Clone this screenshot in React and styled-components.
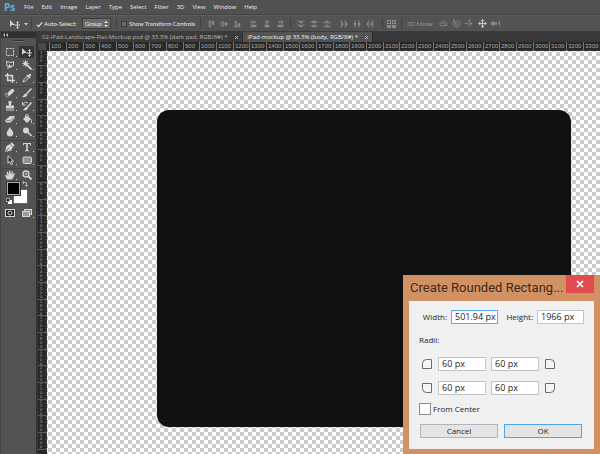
import React from "react";
import styled, { createGlobalStyle, css } from "styled-components";

const ui = '"Open Sans", "Noto Sans", sans-serif';

const GlobalStyle = createGlobalStyle`
  *, *::before, *::after { box-sizing: border-box; }
  body { margin: 0; background: #535353; font-family: ${ui}; }
  button, input, select { font: inherit; color: inherit; margin: 0; padding: 0; border: 0; border-radius: 0; }
`;

const Screen = styled.div`
  display: flex;
  flex-direction: column;
  height: 100vh;
  overflow: hidden;
  font-size: 6px;
  line-height: 8px;
  color: #dcdcdc;
`;

const MenuBar = styled.nav`
  display: flex;
  align-items: center;
  flex: none;
  gap: 8px;
  height: 15px;
  padding-left: 4px;
  background: #515151;
  border-bottom: 1px solid #454545;
`;

const Logo = styled.span`
  width: 12px;
  font-size: 10px;
  line-height: 12px;
  font-weight: 700;
  color: #58b4e8;
`;

const MenuItem = styled.button`
  background: none;
  color: #ececec;
  white-space: nowrap;
`;

const OptionsBar = styled.div`
  display: flex;
  align-items: center;
  flex: none;
  height: 17px;
  padding-left: 10px;
  background: #535353;
  border-top: 1px solid #5e5e5e;
  border-bottom: 1px solid #3b3b3b;
  font-family: Lato, ${ui};
  white-space: nowrap;
`;

const Divider = styled.span`
  flex: none;
  width: 1px;
  height: 11px;
  margin: 0 ${(p) => p.$after || 4}px 0 ${(p) => p.$before || 4}px;
  background: #424242;
`;

const Check = styled.label`
  display: flex;
  flex: none;
  align-items: center;
  gap: 2px;
  width: ${(p) => p.$width}px;
  color: #ececec;
`;

const CheckInput = styled.input`
  appearance: none;
  width: 6px;
  height: 6px;
  background: #6a6a6a;
  border: 1px solid #3c3c3c;
  &:checked {
    border: 0;
    background: none;
  }
  &:checked::after {
    content: "";
    display: block;
    width: 3px;
    height: 6px;
    margin-left: 2px;
    border: solid #eeeeee;
    border-width: 0 1px 1px 0;
    transform: rotate(40deg);
  }
`;

const SelectWrap = styled.span`
  display: flex;
  align-items: center;
  flex: none;
  width: 29px;
  height: 11px;
  margin-left: 5px;
  padding-right: 2px;
  background: #6b6b6b;
  border: 1px solid #3d3d3d;
  border-radius: 1px;
`;

const Select = styled.select`
  appearance: none;
  flex: 1;
  min-width: 0;
  padding-left: 2px;
  background: none;
  color: #ededed;
`;

const IconRow = styled.span`
  display: flex;
  flex: none;
  gap: 3px;
  & + & { margin-left: 7px; }
`;

const IconButton = styled.button`
  display: grid;
  place-items: center;
  flex: none;
  width: 10px;
  height: 10px;
  background: none;
  color: ${(p) => (p.$bright ? "#d0d0d0" : "#8c8c8c")};
`;

const ModeLabel = styled.span`
  width: 26px;
  margin-right: 5px;
  color: #969696;
`;

const Workspace = styled.div`
  display: flex;
  flex: 1;
  min-height: 0;
`;

const Toolbox = styled.aside`
  flex: none;
  width: 37px;
  background: #535353;
  border-left: 1px solid #454545;
  border-right: 1px solid #333333;
`;

const Collapse = styled.button`
  display: flex;
  align-items: center;
  width: 100%;
  height: 6px;
  padding-left: 2px;
  background: #303030;
  color: #bdbdbd;
`;

const Grip = styled.div`
  width: 10px;
  height: 2px;
  margin: 2px auto 4px;
  background: #333333;
  border-bottom: 1px solid #6a6a6a;
`;

const ToolGroup = styled.div`
  display: grid;
  grid-template-columns: 15px 15px;
  grid-auto-rows: 13px;
  column-gap: 2px;
  padding: 0 2px 0 1px;
  & + & {
    margin-top: 1px;
    border-top: 1px solid #454545;
  }
`;

const Tool = styled.button`
  position: relative;
  display: grid;
  place-items: center;
  height: 12px;
  background: ${(p) => (p.$active ? "#353535" : "none")};
  color: #d4d4d4;
  &::after {
    content: "";
    position: absolute;
    right: 0;
    bottom: 1px;
    width: 1px;
    height: 1px;
    background: ${(p) => (p.$plain ? "transparent" : "#c8c8c8")};
  }
`;

const Swatches = styled.div`
  position: relative;
  height: 24px;
  margin: 0 4px 1px;
`;

const Swatch = styled.button`
  position: absolute;
  width: 13px;
  height: 13px;
  ${(p) =>
    p.$front
      ? css`left: 2px; top: 0; background: #000; border: 1px solid #a8a8a8; outline: 1px solid #383838;`
      : css`left: 9px; top: 8px; background: #fff; outline: 1px solid #686868;`}
`;

const SwatchIcon = styled.svg`
  position: absolute;
  ${(p) => (p.$swap ? css`left: 17px; top: -1px;` : css`left: 1px; top: 16px;`)}
`;

const Documents = styled.main`
  display: flex;
  flex-direction: column;
  flex: 1;
  min-width: 0;
`;

const Tabs = styled.div`
  display: flex;
  flex: none;
  height: 10px;
  background: #383838;
`;

const Tab = styled.div`
  display: flex;
  align-items: center;
  gap: 7px;
  padding: 0 3px 0 5px;
  white-space: nowrap;
  background: ${(p) => (p.$active ? "#535353" : "#3b3b3b")};
  color: ${(p) => (p.$active ? "#f2f2f2" : "#b4b4b4")};
  border-right: 1px solid #2c2c2c;
`;

const TabTitle = styled.button`
  background: none;
  white-space: nowrap;
`;

const TabClose = styled.button`
  display: grid;
  place-items: center;
  width: 4px;
  height: 8px;
  background: none;
  color: #b4b4b4;
`;

const Frame = styled.div`
  display: grid;
  grid-template-columns: 10px minmax(0, 1fr);
  grid-template-rows: 9px minmax(0, 1fr);
  flex: 1;
  min-height: 0;
`;

const RulerCorner = styled.div`
  background: #4a4a4a;
  border: 1px solid #303030;
`;

const rulerBox = css`
  display: grid;
  overflow: hidden;
  background: #282828;
  color: #a8a8a8;
  font-family: "Liberation Sans", sans-serif;
`;

const RulerX = styled.div`
  ${rulerBox}
  grid-auto-flow: column;
  grid-auto-columns: 17px 17px 16px;
  padding-left: 2px;
`;

const MarkX = styled.span`
  padding-left: 1px;
  line-height: 8px;
  border-left: 1px solid #747474;
  background: repeating-linear-gradient(90deg, #505050 0 1px, transparent 1px 3px) bottom / 100% 1px no-repeat;
`;

const RulerY = styled.div`
  ${rulerBox}
  grid-template-rows: 15px;
  grid-auto-rows: 17px 17px 16px;
  border-left: 1px solid #383838;
`;

const MarkY = styled.span`
  display: flex;
  flex-direction: column;
  padding-left: 2px;
  font-size: 4px;
  line-height: 4px;
  border-bottom: 1px solid #5c5c5c;
  background: repeating-linear-gradient(#4c4640 0 1px, transparent 1px 3px) right / 2px 100% no-repeat;
`;

const Canvas = styled.div`
  overflow: hidden;
  padding: 59px 0 0 110px;
  background: repeating-conic-gradient(#cbcbcb 0 25%, #ffffff 0 50%) 1px 1px / 8px 8px;
`;

const BodyShape = styled.div`
  width: 414px;
  height: 317px;
  border-radius: 12px;
  background: #111111;
`;

const Dialog = styled.form`
  position: fixed;
  right: 0;
  bottom: 0;
  width: 197px;
  padding: 0 6px 5px;
  background: #d19163;
  color: #1c1c1c;
  font-size: 8px;
  line-height: 12px;
`;

const DialogHead = styled.header`
  display: flex;
  justify-content: space-between;
  height: 26px;
  padding-left: 1px;
`;

const DialogTitle = styled.h1`
  flex: 1;
  min-width: 0;
  margin: 0;
  font-family: Roboto, ${ui};
  font-size: 13px;
  font-weight: 400;
  line-height: 26px;
  white-space: nowrap;
  color: #41291b;
`;

const CloseButton = styled.button`
  display: grid;
  place-items: center;
  flex: none;
  width: 28px;
  height: 18px;
  background: #e04b50;
  color: #ffffff;
`;

const DialogBody = styled.div`
  padding: 9px 10px 11px;
  background: #f0f0f0;
`;

const SizeRow = styled.div`
  display: grid;
  grid-template-columns: 29px 47px 31px 47px;
  justify-content: end;
  align-items: center;
  column-gap: 4px;
`;

const FieldLabel = styled.label`
  text-align: right;
  white-space: nowrap;
`;

const Field = styled.input`
  min-width: 0;
  width: 100%;
  height: 14px;
  padding: 0 0 1px 3px;
  background: #ffffff;
  border: 1px solid ${(p) => (p.$active ? "#58aee8" : "#c4c4c4")};
  font-size: 9px;
  line-height: 11px;
`;

const Radii = styled.fieldset`
  margin: 0;
  padding: 0;
  border: 0;
`;

const Legend = styled.legend`
  padding: 10px 0 11px;
`;

const RadiiGrid = styled.div`
  display: grid;
  grid-template-columns: 12px 48px 48px 12px;
  column-gap: 5px;
  row-gap: 10px;
  align-items: center;
  padding-left: 2px;
`;

const FromCenter = styled.label`
  display: flex;
  align-items: center;
  gap: 2px;
  margin-top: 8px;
`;

const Box = styled.input`
  appearance: none;
  width: 12px;
  height: 12px;
  background: #ffffff;
  border: 1px solid #8c8c8c;
`;

const Actions = styled.div`
  display: grid;
  grid-template-columns: 78px 78px;
  column-gap: 6px;
  margin: 9px 0 0 1px;
`;

const Action = styled.button`
  height: 14px;
  line-height: 12px;
  background: #e4e4e4;
  border: 1px solid ${(p) => (p.$primary ? "#4aa6e8" : "#b4b4b4")};
`;

const Icon = ({ children, size = 10 }) => (
  <svg width={size} height={size} viewBox="0 0 10 10" fill="none" stroke="currentColor" strokeWidth="1" aria-hidden="true">
    {children}
  </svg>
);

const solid = { fill: "currentColor", stroke: "none" };

const moveGlyph = (
  <>
    <path {...solid} d="M0 1v7l2-2h3z" />
    <path d="M7.500 3v6M4.500 6h6" />
    <path {...solid} d="M6 4l1.500-2L9 4zM6 8l1.500 2L9 8z" />
  </>
);

const tools = {
  marquee: <rect x="1.500" y="1.500" width="7" height="7" strokeDasharray="2 1" />,
  move: moveGlyph,
  lasso: <><path d="M2 6L1.500 1.500 6 2.500l2.500-1v4L5 7 2.500 5.500M3 6v3" /><path {...solid} d="M4 4l3 3-3 1z" /></>,
  wand: <><path strokeWidth="1.800" d="M4.500 4.500L9.500 9.500" /><circle {...solid} cx="3.500" cy="3.500" r="2" /><path strokeWidth=".7" d="M3.500 0v7M0 3.500h7M1 1l5 5M6 1L1 6" /></>,
  crop: <><path strokeWidth="1.400" d="M2.500 0v7.500H10M0 2.500h7.500V10" /><path d="M3 7l5-5" strokeWidth=".6" /></>,
  dropper: <><path d="M1 9l1-2.500 3.500-3.500 1.500 1.500L3.500 8z" /><path {...solid} d="M4.500 2.500l1-1 1 .8L8 .5 9.500 2 7.700 3.700l.8 1-1 .8z" /></>,
  heal: <><path strokeWidth="3.400" strokeLinecap="round" d="M4 6l3.500-3.500" /><path d="M1 5c-1 2 0 4 2.500 4" strokeDasharray="1 .6" /></>,
  brush: <><path strokeWidth="1.500" d="M9.500.5L4.500 6" /><path {...solid} d="M4 5.500L5.500 7C4.500 9 2 9.500 0 9c1.500-.5 1.500-3 4-3.500z" /></>,
  stamp: <path {...solid} d="M3.500 0h3v1.500L6 4.500h3v3H1v-3h3l-.5-3zM1 8.500h8v1H1z" />,
  history: <><path strokeWidth="1.500" d="M9.500 1.500L5 6.500" /><path {...solid} d="M4.500 6L6 7.500C5 9.500 3 9.500 1 9c1.500-.5 1.500-3 3.500-3z" /><path d="M1 3.500C2 1 4.500 1 6 2M.5 1v3h3" /></>,
  eraser: <><path {...solid} d="M0 6.500L5 2h4.500L10 4 5.500 8.500H1z" /><path stroke="#6b6b6b" strokeWidth=".7" d="M1 6.500h4.500L10 3" /></>,
  bucket: <><path {...solid} d="M1 5l4-3.500L9 5 5 9z" /><path d="M3.500 4V1.500C3.500 0 6 0 6 1.500V4M8.500 5c1 1 1 2 1 4" /></>,
  blur: <path {...solid} d="M5 0c1 2.500 3.300 4 3.300 6.300C8.300 8.400 7 9.500 5 9.500S1.700 8.400 1.700 6.300C1.700 4 4 2.500 5 0z" />,
  dodge: <><circle {...solid} cx="4" cy="3.500" r="3" /><path strokeWidth="1.600" d="M6 5.500L9.500 9" /></>,
  pen: <><path {...solid} d="M0 10l1.500-6L5 2l3 3-2 3.500z" /><path strokeWidth="2" d="M6 1l3 3" /><path stroke="#535353" strokeWidth=".8" d="M.5 9.500L4 6" /></>,
  type: <path {...solid} d="M1 1h8v2.500H8.300L7.800 2H5.800v6l1.200.5v.7H3v-.7L4.200 8V2h-2l-.5 1.500H1z" />,
  path: <path d="M3 .8v7.400L4.700 6.500 6 9.500 7.500 9 6 6h2.500z" stroke="#d4d4d4" fill="#202020" />,
  shape: <rect x="1" y="2" width="8.500" height="6.500" rx="1.200" fill="#929292" />,
  hand: <path {...solid} d="M2 9.500L0 5.500l1-.8L2.500 6 1.500 2l1-.4L4 4.500 4 .5h1.200L5.700 4.500 7 1l1 .4L7.300 5 9 3l1 .6-1.800 4L7 9.500z" />,
  zoom: <><circle cx="4" cy="4" r="3" strokeWidth="1.400" /><path strokeWidth="2" d="M6.500 6.500L9.500 9.500" /><path d="M2.500 4h3M4 2.500v3" strokeWidth=".8" /></>,
  mask: <><rect x=".5" y="1.500" width="9" height="7" fill="#252525" /><circle cx="5" cy="5" r="2" /></>,
  screen: <><rect x="2.500" y="1.500" width="7" height="5" fill="#858585" /><rect x=".5" y="3.500" width="7" height="5" fill="#9b9b9b" /></>,
};

const toolGroups = [
  ["marquee", "move", "lasso", "wand", "crop", "dropper"],
  ["heal", "brush", "stamp", "history", "eraser", "bucket", "blur", "dodge"],
  ["pen", "type", "path", "shape"],
  ["hand", "zoom"],
];

const alignGroups = [
  {
    "Align top edges": <><path d="M1 1.500h8" /><rect x="2.500" y="2.500" width="2" height="6" /><path {...solid} d="M6 2h3v4H6z" /></>,
    "Align vertical centers": <><path d="M0 5h10" /><rect x="1.500" y="2.500" width="3" height="5" fill="#535353" /><path {...solid} d="M6 3h3v4H6z" /></>,
    "Align bottom edges": <><path d="M1 8.500h8" /><rect x="2.500" y="1.500" width="2" height="6" /><path {...solid} d="M6 4h3v4H6z" /></>,
  },
  {
    "Align left edges": <><path d="M1.500 1v8" /><rect x="2.500" y="1.500" width="4" height="2" /><path {...solid} d="M2 6h6v3H2z" /></>,
    "Align horizontal centers": <><path d="M5 0v10" /><rect x="3.500" y="1.500" width="3" height="2" fill="#535353" /><path {...solid} d="M2 6h6v3H2z" /></>,
    "Align right edges": <><path d="M8.500 1v8" /><rect x="3.500" y="1.500" width="4" height="2" /><path {...solid} d="M2 6h6v3H2z" /></>,
  },
  {
    "Distribute top edges": <><path d="M0 1.500h10M0 6.500h10" /><path {...solid} d="M3 2h4v2H3zM3 7h4v2H3z" /></>,
    "Distribute vertical centers": <><path d="M0 2.500h10M0 7.500h10" /><path {...solid} d="M3 1h4v3H3zM3 6h4v3H3z" /></>,
    "Distribute bottom edges": <><path d="M0 3.500h10M0 8.500h10" /><path {...solid} d="M3 1h4v2H3zM3 6h4v2H3z" /></>,
  },
  {
    "Distribute left edges": <><path d="M1.500 0v10M6.500 0v10" /><path {...solid} d="M2 3h2v4H2zM7 3h2v4H7z" /></>,
    "Distribute horizontal centers": <><path d="M2.500 0v10M7.500 0v10" /><path {...solid} d="M1 3h3v4H1zM6 3h3v4H6z" /></>,
    "Distribute right edges": <><path d="M3.500 0v10M8.500 0v10" /><path {...solid} d="M1 3h2v4H1zM6 3h2v4H6z" /></>,
  },
];

const modes = {
  Orbit: <><path d="M3 7.500C0 7 0 4 3 4.500 3 2 7 1.500 7.500 4c2.500.5 2 3.500-1 3.500z" /><path d="M3.500 4.500c2 0 4 1 4 3" /></>,
  Roll: <><path d="M2 2.500A4 4 0 1 0 6 1M2 0v3h3" /><circle cx="5" cy="5" r="1.500" /></>,
  Pan: <><path strokeDasharray="3 2" d="M5 0v10M0 5h10" /><circle cx="5" cy="5" r="2.500" strokeDasharray="2 1" /></>,
  Slide: <><path d="M5 1v8M1 5h8" /><path {...solid} d="M3 2.500L5 0l2 2.500zM3 7.500L5 10l2-2.500zM2.500 3L0 5l2.500 2zM7.500 3L10 5 7.500 7z" /></>,
  Zoom: <><path {...solid} d="M0 3h5v4H0zM5 5l2-2v4z" /><path d="M9.500 2v6M8 5h2" /></>,
};

const menus = ["File", "Edit", "Image", "Layer", "Type", "Select", "Filter", "3D", "View", "Window", "Help"];

const documents = [
  { title: "02-iPad-Landscape-Flat-Mockup.psd @ 33.3% (dark pad, RGB/8#) *" },
  { title: "iPad-mockup @ 33.3% (body, RGB/8#) *", active: true },
];

const marks = (count) => Array.from({ length: count }, (_, i) => (i + 1) * 100);

const corners = {
  topLeft: "M1.500 10.500V5.500Q1.500 1.500 5.500 1.500H10.500V10.500z",
  topRight: "M1.500 1.500H6.500Q10.500 1.500 10.500 5.500V10.500H1.500z",
  bottomLeft: "M1.500 1.500H10.500V10.500H5.500Q1.500 10.500 1.500 6.500z",
  bottomRight: "M1.500 1.500H10.500V6.500Q10.500 10.500 6.500 10.500H1.500z",
};

const Corner = ({ at }) => (
  <svg width="12" height="12" viewBox="0 0 12 12" fill="#f4f4f4" stroke="#6c6c6c" strokeLinejoin="round" aria-hidden="true">
    <path d={corners[at]} />
  </svg>
);

const ToolButton = ({ name, plain }) => (
  <Tool type="button" aria-label={name} $active={name === "move"} $plain={plain || name === "move" || name === "zoom"}>
    <Icon>{tools[name]}</Icon>
  </Tool>
);

const AlignRow = ({ group }) => (
  <IconRow>
    {Object.entries(group).map(([name, glyph]) => (
      <IconButton key={name} type="button" aria-label={name}><Icon size={8}>{glyph}</Icon></IconButton>
    ))}
  </IconRow>
);

function Options() {
  return (
    <OptionsBar>
      <IconButton $bright type="button" aria-label="Move tool"><Icon>{moveGlyph}</Icon></IconButton>
      <IconButton $bright type="button" aria-label="Tool presets">
        <Icon><path {...solid} d="M4 4h4L6 6.500z" /></Icon>
      </IconButton>
      <Divider $before={1} />
      <Check $width={41}><CheckInput type="checkbox" defaultChecked />Auto-Select:</Check>
      <SelectWrap>
        <Select aria-label="Auto-Select target" defaultValue="Group">
          <option>Group</option>
          <option>Layer</option>
        </Select>
        <svg width="4" height="6" viewBox="0 0 4 6" fill="#e4e4e4" aria-hidden="true"><path d="M0 2l2-2 2 2zM0 4l2 2 2-2z" /></svg>
      </SelectWrap>
      <Divider $before={5} />
      <Check $width={75}><CheckInput type="checkbox" />Show Transform Controls</Check>
      <Divider $after={5} />
      <AlignRow group={alignGroups[0]} />
      <AlignRow group={alignGroups[1]} />
      <Divider $before={5} $after={5} />
      <AlignRow group={alignGroups[2]} />
      <AlignRow group={alignGroups[3]} />
      <Divider $before={7} />
      <IconButton type="button" aria-label="Auto-align layers">
        <Icon><rect x=".5" y="1.500" width="3" height="3" /><rect x="5.500" y="1.500" width="3" height="3" /><path {...solid} d="M0 6h4v3H0zM5 6h4v3H5z" /></Icon>
      </IconButton>
      <Divider $after={5} />
      <ModeLabel>3D Mode:</ModeLabel>
      <IconRow>
        {Object.entries(modes).map(([name, glyph]) => (
          <IconButton key={name} type="button" aria-label={name} $bright={name === "Slide"}><Icon size={9}>{glyph}</Icon></IconButton>
        ))}
      </IconRow>
    </OptionsBar>
  );
}

function RoundedRectangleDialog() {
  return (
    <Dialog role="dialog" aria-labelledby="dialog-title" onSubmit={(e) => e.preventDefault()}>
      <DialogHead>
        <DialogTitle id="dialog-title">Create Rounded Rectang...</DialogTitle>
        <CloseButton type="button" aria-label="Close">
          <svg width="8" height="8" viewBox="0 0 8 8" stroke="currentColor" strokeWidth="1.600" aria-hidden="true"><path d="M1 1l6 6M7 1L1 7" /></svg>
        </CloseButton>
      </DialogHead>
      <DialogBody>
        <SizeRow>
          <FieldLabel htmlFor="width">Width:</FieldLabel>
          <Field id="width" $active defaultValue="501.94 px" />
          <FieldLabel htmlFor="height">Height:</FieldLabel>
          <Field id="height" defaultValue="1966 px" />
        </SizeRow>
        <Radii>
          <Legend>Radii:</Legend>
          <RadiiGrid>
            <Corner at="topLeft" />
            <Field aria-label="Top left radius" defaultValue="60 px" />
            <Field aria-label="Top right radius" defaultValue="60 px" />
            <Corner at="topRight" />
            <Corner at="bottomLeft" />
            <Field aria-label="Bottom left radius" defaultValue="60 px" />
            <Field aria-label="Bottom right radius" defaultValue="60 px" />
            <Corner at="bottomRight" />
          </RadiiGrid>
        </Radii>
        <FromCenter><Box type="checkbox" />From Center</FromCenter>
        <Actions>
          <Action type="button">Cancel</Action>
          <Action type="submit" $primary>OK</Action>
        </Actions>
      </DialogBody>
    </Dialog>
  );
}

export default function App() {
  return (
    <Screen>
      <GlobalStyle />
      <MenuBar>
        <Logo>Ps</Logo>
        {menus.map((m) => <MenuItem key={m} type="button">{m}</MenuItem>)}
      </MenuBar>
      <Options />
      <Workspace>
        <Toolbox>
          <Collapse type="button" aria-label="Collapse tools">
            <svg width="5" height="4" viewBox="0 0 5 4" fill="currentColor" aria-hidden="true"><path d="M0 2l2-2v4zM3 2l2-2v4z" /></svg>
          </Collapse>
          <Grip />
          {toolGroups.map((group) => (
            <ToolGroup key={group[0]}>
              {group.map((name) => <ToolButton key={name} name={name} />)}
            </ToolGroup>
          ))}
          <Swatches>
            <Swatch type="button" aria-label="Background color" />
            <Swatch $front type="button" aria-label="Foreground color" />
            <SwatchIcon $swap width="6" height="6" viewBox="0 0 6 6" fill="none" stroke="#c4c4c4" aria-hidden="true">
              <path d="M1 1.500h3.500V5M2 0L.5 1.500 2 3M3 4l1.500 1.500L6 4" strokeWidth=".8" />
            </SwatchIcon>
            <SwatchIcon width="6" height="6" viewBox="0 0 6 6" aria-hidden="true">
              <path fill="#ffffff" d="M2 2h4v4H2z" />
              <path fill="#111111" stroke="#c4c4c4" strokeWidth=".8" d="M.5.5h3v3h-3z" />
            </SwatchIcon>
          </Swatches>
          <ToolGroup>
            <ToolButton name="mask" plain />
            <ToolButton name="screen" />
          </ToolGroup>
        </Toolbox>
        <Documents>
          <Tabs>
            {documents.map((d) => (
              <Tab key={d.title} $active={d.active}>
                <TabTitle type="button">{d.title}</TabTitle>
                <TabClose type="button" aria-label="Close document">
                  <svg width="3" height="3" viewBox="0 0 3 3" stroke="currentColor" aria-hidden="true"><path d="M0 0l3 3M3 0L0 3" /></svg>
                </TabClose>
              </Tab>
            ))}
          </Tabs>
          <Frame>
            <RulerCorner />
            <RulerX>{marks(33).map((n) => <MarkX key={n}>{n}</MarkX>)}</RulerX>
            <RulerY>
              {marks(24).map((n) => (
                <MarkY key={n}>{String(n).split("").map((c, i) => <span key={i}>{c}</span>)}</MarkY>
              ))}
            </RulerY>
            <Canvas><BodyShape /></Canvas>
          </Frame>
        </Documents>
      </Workspace>
      <RoundedRectangleDialog />
    </Screen>
  );
}
